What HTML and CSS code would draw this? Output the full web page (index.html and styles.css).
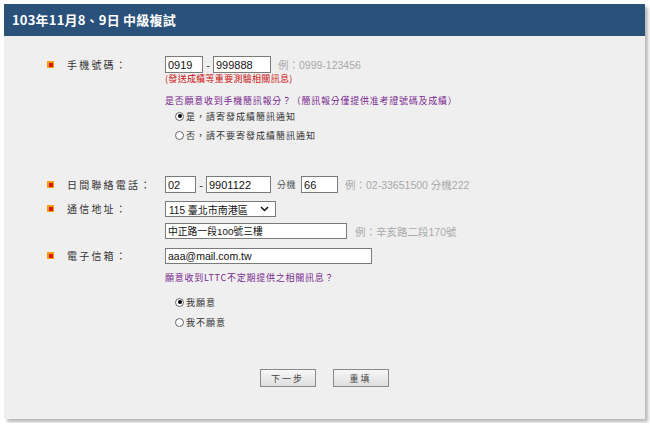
FILE: index.html
```html
<!DOCTYPE html>
<html lang="zh-Hant">

<head>
    <meta charset="UTF-8">
    <title>中級複試</title>
    <link rel="stylesheet" href="styles.css">
</head>

<body>
    <div class="panel">
        <div class="title">103年11月8、9日 中級複試</div>
        <div class="form">
            <div class="row">
                <span class="bullet"></span>
                <span class="label">手機號碼：</span>
                <div class="field">
                    <div class="line">
                        <input class="txt w38" type="text" value="0919">
                        <span class="dash">-</span>
                        <input class="txt w58" type="text" value="999888">
                        <span class="hint">例：0999-123456</span>
                    </div>
                    <p class="note">(發送成績等重要測驗相關訊息)</p>
                    <p class="ask">是否願意收到手機簡訊報分？（簡訊報分僅提供准考證號碼及成績）</p>
                    <label class="opt first"><input type="radio" name="sms" checked>是，請寄發成績簡訊通知</label>
                    <label class="opt"><input type="radio" name="sms">否，請不要寄發成績簡訊通知</label>
                </div>
            </div>

            <div class="row phone">
                <span class="bullet"></span>
                <span class="label">日間聯絡電話：</span>
                <div class="field">
                    <div class="line">
                        <input class="txt w30" type="text" value="02">
                        <span class="dash">-</span>
                        <input class="txt w65" type="text" value="9901122">
                        <span class="ext">分機</span>
                        <input class="txt w37" type="text" value="66">
                        <span class="hint">例：02-33651500 分機222</span>
                    </div>
                </div>
            </div>

            <div class="row addr">
                <span class="bullet"></span>
                <span class="label">通信地址：</span>
                <div class="field">
                    <div class="line">
                        <div class="select">115 臺北市南港區
                            <svg width="9" height="6" viewBox="0 0 9 6"><path d="M1 1 L4.5 4.5 L8 1" fill="none" stroke="#111" stroke-width="1.5"/></svg>
                        </div>
                    </div>
                    <div class="line street">
                        <input class="txt small w182" type="text" value="中正路一段100號三樓">
                        <span class="hint far">例：辛亥路二段170號</span>
                    </div>
                </div>
            </div>

            <div class="row mail">
                <span class="bullet"></span>
                <span class="label">電子信箱：</span>
                <div class="field">
                    <div class="line">
                        <input class="txt mid w207" type="text" value="aaa@mail.com.tw">
                    </div>
                    <p class="ask ask2">願意收到LTTC不定期提供之相關訊息？</p>
                    <label class="opt first2"><input type="radio" name="news" checked>我願意</label>
                    <label class="opt second2"><input type="radio" name="news">我不願意</label>
                </div>
            </div>
        </div>
        <div class="buttons">
            <button class="btn">下一步</button>
            <button class="btn">重填</button>
        </div>
    </div>
</body>

</html>
```

FILE: styles.css
```css
* {
    padding: 0;
    margin: 0;
    box-sizing: border-box;
}

body {
    background: #fff;
    padding: 4px;
    font-family: "Noto Sans CJK TC", sans-serif;
    font-size: 9px;
    color: #333;
}

.panel {
    width: 641px;
    height: 415px;
    background: #efefef;
    box-shadow: 3px 3px 3px rgba(0, 0, 0, .28);
}

.title {
    height: 32px;
    line-height: 32px;
    padding-left: 8px;
    background: #29517a;
    color: #fff;
    font-size: 13px;
    font-weight: bold;
    letter-spacing: 0.2px;
}

.form {
    padding: 20px 0 0 43px;
}

.row {
    display: grid;
    grid-template-columns: 20px 98px auto;
    align-items: start;
}

.phone {
    margin-top: 35px;
}

.addr {
    margin-top: 8px;
}

.mail {
    margin-top: 9px;
}

.bullet {
    position: relative;
    width: 7px;
    height: 7px;
    margin-top: 5px;
    background: #f2a10c;
}

.bullet::after {
    content: "";
    position: absolute;
    left: 2px;
    top: 2px;
    width: 4px;
    height: 4px;
    background: #d8141a;
}

.addr .bullet,
.mail .bullet {
    margin-top: 4px;
}

.label {
    line-height: 17px;
    font-size: 10px;
    letter-spacing: 2.2px;
    color: #333;
}

.addr .label,
.mail .label {
    line-height: 16px;
}

.line {
    display: flex;
    align-items: center;
    height: 17px;
}

.addr .line,
.mail .line {
    height: 16px;
}

.street {
    margin-top: 6px;
}

.txt {
    height: 17px;
    border: 1px solid #7a7a7a;
    background: #fff;
    padding: 0 2px;
    font-family: "Liberation Sans", "Noto Sans CJK TC", sans-serif;
    font-size: 11px;
    color: #111;
    outline: none;
}

.txt.small {
    font-size: 9.8px;
}

.txt.mid {
    font-size: 10.5px;
}

.addr .txt,
.mail .txt {
    height: 16px;
}

.w30 { width: 31px; }
.w37 { width: 37px; }
.w38 { width: 38px; }
.w58 { width: 58px; }
.w65 { width: 65px; }
.w182 { width: 182px; }
.w207 { width: 207px; }

.dash {
    width: 10px;
    text-align: center;
    font-family: "Liberation Sans", sans-serif;
    font-size: 11px;
    color: #333;
}

.ext {
    margin: 0 5px 0 6px;
    font-size: 9px;
    letter-spacing: 0.5px;
    color: #555;
}

.hint {
    margin-left: 7px;
    font-family: "Liberation Sans", "Noto Sans CJK TC", sans-serif;
    font-size: 10.5px;
    color: #a9a9a9;
}

.hint.far {
    margin-left: 8px;
}

.select {
    display: flex;
    align-items: center;
    justify-content: space-between;
    width: 111px;
    height: 16px;
    padding: 0 6px 0 3px;
    border: 1px solid #7a7a7a;
    background: #fff;
    font-family: "Liberation Sans", "Noto Sans CJK TC", sans-serif;
    font-size: 10px;
    color: #111;
}

.note {
    line-height: 12px;
    color: #cc1111;
    letter-spacing: 0.3px;
}

.ask {
    margin-top: 10px;
    line-height: 12px;
    color: #7a2890;
    letter-spacing: 0.75px;
}

.ask2 {
    margin-top: 8px;
}

.opt {
    display: flex;
    align-items: center;
    height: 12px;
    margin-top: 7px;
    padding-left: 10px;
    letter-spacing: 1px;
    color: #333;
}

.opt.first {
    margin-top: 3px;
}

.opt.first2 {
    margin-top: 12px;
}

.opt.second2 {
    margin-top: 8px;
}

.opt input {
    appearance: none;
    width: 9px;
    height: 9px;
    margin-right: 2px;
    border: 1px solid #666;
    border-radius: 50%;
    background: #fff;
    position: relative;
}

.opt input:checked::after {
    content: "";
    position: absolute;
    left: 1.5px;
    top: 1.5px;
    width: 4px;
    height: 4px;
    border-radius: 50%;
    background: #000;
}

.buttons {
    display: flex;
    justify-content: center;
    gap: 17px;
    margin-top: 41px;
    padding-right: 1px;
}

.btn {
    width: 56px;
    height: 18px;
    border: 1px solid #8a8a8a;
    background: linear-gradient(#f7f7f7, #dedede);
    font-family: "Noto Sans CJK TC", sans-serif;
    font-size: 9px;
    letter-spacing: 2px;
    color: #444;
}
```
